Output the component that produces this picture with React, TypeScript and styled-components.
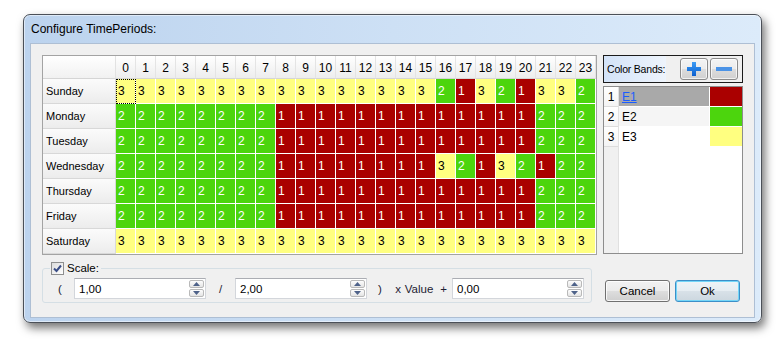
import React from "react";
import styled, { createGlobalStyle } from "styled-components";

const GlobalStyle = createGlobalStyle`
  html, body {
    margin: 0;
    padding: 0;
    background: #ffffff;
  }
  body {
    font-family: "Liberation Sans", Arial, sans-serif;
    font-size: 11px;
    color: #000;
  }
  * {
    box-sizing: border-box;
  }
`;

const BAND_BG: Record<number, string> = {
  1: "#aa0000",
  2: "#4cd50d",
  3: "#ffff80",
};

const Page = styled.div`
  width: 777px;
  height: 342px;
  padding: 14px 0 0 23px;
`;

const Window = styled.div`
  width: 739px;
  height: 309px;
  border: 1px solid #4b5058;
  border-radius: 7px;
  background: linear-gradient(to right, #bcd3ee 0%, #cde0f5 50%, #dcebfa 100%);
  box-shadow: 3px 5px 10px rgba(0, 0, 0, 0.55),
    inset 0 0 0 1px rgba(255, 255, 255, 0.5);
  padding: 0 6px 4px 6px;
  display: flex;
  flex-direction: column;
`;

const TitleBar = styled.div`
  height: 28px;
  display: flex;
  align-items: center;
  padding-left: 1px;
  font-size: 12px;
  color: #000;
`;

const Client = styled.div`
  width: 725px;
  height: 275px;
  border: 1px solid #aebfd4;
  background: #f0f0f0;
  padding: 11px 10px 0 11px;
  display: flex;
  flex-direction: column;
`;

const TopRow = styled.div`
  display: flex;
  gap: 6px;
`;

const Grid = styled.div`
  width: 555px;
  height: 200px;
  border: 1px solid #a3a3a3;
  background: #ffffff;
  display: grid;
  grid-template-columns: 73px repeat(24, 20px);
  grid-template-rows: 23px repeat(7, 25px);
`;

const Corner = styled.div`
  background: linear-gradient(#ffffff, #f1f1f1);
  border-bottom: 1px solid #d5d5d5;
  border-right: 1px solid #e2e2e2;
`;

const HourHead = styled.div`
  background: linear-gradient(#ffffff 0%, #f7f7f7 45%, #ededed 100%);
  border-bottom: 1px solid #d5d5d5;
  border-right: 1px solid #e4e4e4;
  display: flex;
  align-items: center;
  justify-content: center;
  padding-top: 2px;
  font-size: 12px;
`;

const DayHead = styled.div`
  background: linear-gradient(#fbfbfb 0%, #f4f4f4 50%, #ececec 100%);
  border-bottom: 1px solid #d8d8d8;
  border-right: 1px solid #d8d8d8;
  display: flex;
  align-items: center;
  padding-left: 3px;
`;

const Cell = styled.div<{ $band: number; $focus?: boolean }>`
  background: ${(p) => BAND_BG[p.$band]};
  color: ${(p) => (p.$band === 3 ? "#000" : "#fff")};
  border-right: 1px solid #fff;
  border-bottom: 1px solid #fff;
  display: flex;
  align-items: center;
  padding-left: 2px;
  font-size: 12px;
  outline: ${(p) => (p.$focus ? "1px dotted #000" : "none")};
  outline-offset: -1px;
`;

const BandsPanel = styled.div`
  width: 140px;
  display: flex;
  flex-direction: column;
  gap: 3px;
`;

const BandsBar = styled.div`
  height: 28px;
  border: 1px solid #1b1b1b;
  background: #f0f0f0;
  display: flex;
  align-items: center;
`;

const BandsLabel = styled.div`
  width: 62px;
  height: 100%;
  background: linear-gradient(to right, #d3e3f8, #eef4fc);
  display: flex;
  align-items: center;
  padding-left: 3px;
  white-space: nowrap;
  font-size: 10.5px;
  letter-spacing: -0.2px;
`;

const ToolGroup = styled.div`
  display: flex;
  gap: 2px;
  margin-left: 14px;
`;

const ToolButton = styled.div`
  width: 28px;
  height: 22px;
  border: 1px solid #8a8a8a;
  border-radius: 3px;
  background: linear-gradient(#f4f4f4 0%, #ececec 48%, #dcdcdc 52%, #d0d0d0 100%);
  box-shadow: inset 0 0 0 1px rgba(255, 255, 255, 0.7);
  display: flex;
  align-items: center;
  justify-content: center;
`;

const BandsTable = styled.div`
  height: 168px;
  border: 1px solid #8d8d8d;
  display: flex;
  background: #ffffff;
`;

const RowHeads = styled.div`
  width: 15px;
  background: #f0f0f0;
  border-right: 1px solid #e0e0e0;
  display: flex;
  flex-direction: column;
`;

const RowHead = styled.div`
  height: 20px;
  background: linear-gradient(#ffffff, #f4f4f4);
  border-bottom: 1px solid #dcdcdc;
  display: flex;
  align-items: center;
  justify-content: center;
  font-size: 12px;
`;

const BandsBody = styled.div`
  flex: 1;
  display: flex;
  flex-direction: column;
`;

const BandRow = styled.div`
  height: 20px;
  display: flex;
`;

const BandName = styled.div<{ $selected?: boolean; $alt?: boolean }>`
  flex: 1;
  display: flex;
  align-items: center;
  padding-left: 3px;
  font-size: 12px;
  background: ${(p) => (p.$selected ? "#a9a9a9" : p.$alt ? "#f5f5f5" : "#fff")};
  color: ${(p) => (p.$selected ? "#1a5cff" : "#000")};
  text-decoration: ${(p) => (p.$selected ? "underline" : "none")};
  border-bottom: 1px solid #fff;
`;

const BandColor = styled.div<{ $band: number }>`
  width: 33px;
  background: ${(p) => BAND_BG[p.$band]};
  border-left: 1px solid #fff;
  border-bottom: 1px solid #fff;
`;

const BottomRow = styled.div`
  display: flex;
  align-items: flex-end;
  margin-top: 6px;
`;

const ScaleGroup = styled.fieldset`
  width: 550px;
  margin: 0;
  padding: 3px 0 3px 0;
  border: 1px solid #d5dfe5;
  border-radius: 3px;
`;

const ScaleLegend = styled.legend`
  margin-left: 7px;
  padding: 0 2px 0 1px;
  height: 14px;
  display: flex;
  align-items: center;
  gap: 3px;
  font-size: 11.5px;
`;

const CheckBox = styled.div`
  width: 13px;
  height: 13px;
  border: 1px solid #8e8f8f;
  background: linear-gradient(135deg, #dcdcdc, #ffffff);
  display: flex;
  align-items: center;
  justify-content: center;
`;

const ScaleLine = styled.div`
  display: flex;
  align-items: center;
  padding-left: 3px;
`;

const Sym = styled.span<{ $w: number }>`
  width: ${(p) => p.$w}px;
  text-align: center;
  color: #1d2233;
  font-size: 11.5px;
`;

const SpinBox = styled.div`
  width: 132px;
  height: 21px;
  border: 1px solid #d3d6db;
  border-top-color: #abadb3;
  background: #fff;
  display: flex;
  align-items: center;
  padding: 0 1px 0 4px;
`;

const SpinValue = styled.span`
  flex: 1;
  font-size: 11.5px;
`;

const SpinArrows = styled.div`
  width: 15px;
  display: flex;
  flex-direction: column;
  gap: 1px;
`;

const SpinArrow = styled.div`
  height: 8px;
  border: 1px solid #b9b9b9;
  border-radius: 2px;
  background: linear-gradient(#fdfdfd, #e4e4e4);
  display: flex;
  align-items: center;
  justify-content: center;
`;

const DialogButtons = styled.div`
  display: flex;
  gap: 5px;
  margin-left: 13px;
  margin-bottom: 1px;
`;

const DialogButton = styled.div<{ $default?: boolean }>`
  width: 65px;
  height: 22px;
  border: 1px solid ${(p) => (p.$default ? "#3c8fc8" : "#707070")};
  border-radius: 3px;
  background: ${(p) =>
    p.$default
      ? "linear-gradient(#eef4f8 0%, #e6edf2 48%, #d8e1e8 52%, #ccd7df 100%)"
      : "linear-gradient(#f2f2f2 0%, #ebebeb 48%, #dddddd 52%, #cfcfcf 100%)"};
  box-shadow: inset 0 0 0 1px
    ${(p) => (p.$default ? "#74d6f8" : "rgba(255, 255, 255, 0.8)")};
  display: flex;
  align-items: center;
  justify-content: center;
  font-size: 11.5px;
`;

const fill = (v: number, n: number) => Array.from({ length: n }, () => v);

const days: { name: string; bands: number[] }[] = [
  { name: "Sunday", bands: [...fill(3, 16), 2, 1, 3, 2, 1, 3, 3, 2] },
  { name: "Monday", bands: [...fill(2, 8), ...fill(1, 13), ...fill(2, 3)] },
  { name: "Tuesday", bands: [...fill(2, 8), ...fill(1, 13), ...fill(2, 3)] },
  { name: "Wednesday", bands: [...fill(2, 8), ...fill(1, 8), 3, 2, 1, 3, 2, 1, 2, 2] },
  { name: "Thursday", bands: [...fill(2, 8), ...fill(1, 13), ...fill(2, 3)] },
  { name: "Friday", bands: [...fill(2, 8), ...fill(1, 13), ...fill(2, 3)] },
  { name: "Saturday", bands: fill(3, 24) },
];

const bands = [
  { id: 1, name: "E1" },
  { id: 2, name: "E2" },
  { id: 3, name: "E3" },
];

const PlusIcon = () => (
  <svg width="16" height="16" viewBox="0 0 16 16">
    <defs>
      <linearGradient id="plusg" x1="0" y1="0" x2="0" y2="1">
        <stop offset="0" stopColor="#3d9cf5" />
        <stop offset="1" stopColor="#0b5fcf" />
      </linearGradient>
    </defs>
    <path d="M6 1h4v5h5v4h-5v5H6v-5H1V6h5z" fill="url(#plusg)" />
  </svg>
);

const MinusIcon = () => (
  <svg width="18" height="6" viewBox="0 0 18 6">
    <rect x="1" y="1" width="16" height="4" fill="#4b93e6" />
  </svg>
);

const Arrow = ({ up }: { up?: boolean }) => (
  <svg width="7" height="4" viewBox="0 0 7 4">
    <path d={up ? "M0 4L3.5 0L7 4z" : "M0 0L3.5 4L7 0z"} fill="#4e6289" />
  </svg>
);

const Spin = ({ value }: { value: string }) => (
  <SpinBox>
    <SpinValue>{value}</SpinValue>
    <SpinArrows>
      <SpinArrow>
        <Arrow up />
      </SpinArrow>
      <SpinArrow>
        <Arrow />
      </SpinArrow>
    </SpinArrows>
  </SpinBox>
);

const App: React.FunctionComponent = () => (
  <Page>
    <GlobalStyle />
    <Window>
      <TitleBar>Configure TimePeriods:</TitleBar>
      <Client>
        <TopRow>
          <Grid>
            <Corner />
            {Array.from({ length: 24 }, (_, h) => (
              <HourHead key={h}>{h}</HourHead>
            ))}
            {days.map((day, d) => (
              <React.Fragment key={day.name}>
                <DayHead>{day.name}</DayHead>
                {day.bands.map((b, h) => (
                  <Cell key={h} $band={b} $focus={d === 0 && h === 0}>
                    {b}
                  </Cell>
                ))}
              </React.Fragment>
            ))}
          </Grid>
          <BandsPanel>
            <BandsBar>
              <BandsLabel>Color Bands:</BandsLabel>
              <ToolGroup>
                <ToolButton>
                  <PlusIcon />
                </ToolButton>
                <ToolButton>
                  <MinusIcon />
                </ToolButton>
              </ToolGroup>
            </BandsBar>
            <BandsTable>
              <RowHeads>
                {bands.map((b) => (
                  <RowHead key={b.id}>{b.id}</RowHead>
                ))}
              </RowHeads>
              <BandsBody>
                {bands.map((b, i) => (
                  <BandRow key={b.id}>
                    <BandName $selected={i === 0} $alt={i === 1}>
                      {b.name}
                    </BandName>
                    <BandColor $band={b.id} />
                  </BandRow>
                ))}
              </BandsBody>
            </BandsTable>
          </BandsPanel>
        </TopRow>
        <BottomRow>
          <ScaleGroup>
            <ScaleLegend>
              <CheckBox>
                <svg width="9" height="9" viewBox="0 0 9 9">
                  <path d="M1 4.5L3.5 7L8 1.5" stroke="#3a4d86" strokeWidth="2" fill="none" />
                </svg>
              </CheckBox>
              Scale:
            </ScaleLegend>
            <ScaleLine>
              <Sym $w={28}>(</Sym>
              <Spin value="1,00" />
              <Sym $w={29}>/</Sym>
              <Spin value="2,00" />
              <Sym $w={26}>)</Sym>
              <Sym $w={10}>x</Sym>
              <Sym $w={32}>Value</Sym>
              <Sym $w={17}>+</Sym>
              <Spin value="0,00" />
            </ScaleLine>
          </ScaleGroup>
          <DialogButtons>
            <DialogButton>Cancel</DialogButton>
            <DialogButton $default>Ok</DialogButton>
          </DialogButtons>
        </BottomRow>
      </Client>
    </Window>
  </Page>
);

export default App;
